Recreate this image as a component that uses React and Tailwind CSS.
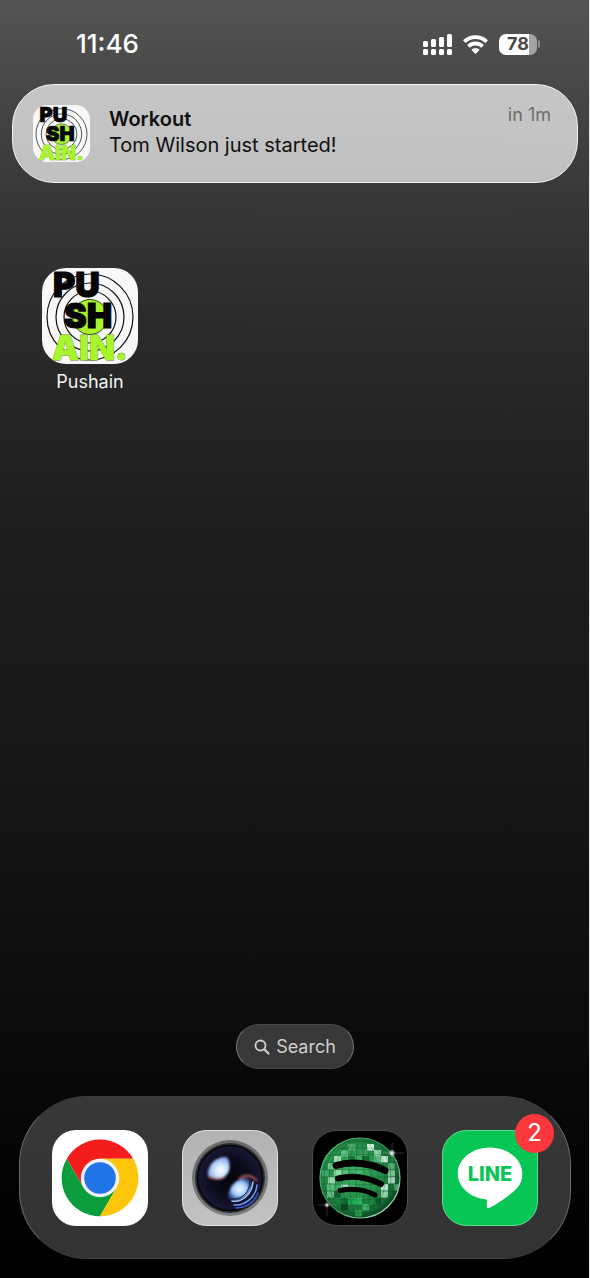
import React from 'react';

const RINGS = [43, 34, 26];
const DISCO_ROWS = [14, 20, 26, 33, 40, 47, 54, 61, 68, 74, 80];
const DISCO_COLS = [4, 11, 18, 25, 31, 36];

// [x, y, color, opacity] mirror tiles that catch the light
const DISCO_TILES = [
  [22, 26, '#d8f5e2', 0.7], [29, 20, '#7fd6a0', 0.7], [36, 14, '#5cb57d', 0.8], [55, 14, '#eafff2', 0.9],
  [62, 20, '#bff0cf', 0.7], [69, 26, '#e6fff0', 0.8], [48, 20, '#3f9a5f', 0.8], [22, 40, '#a9e8bf', 0.8],
  [16, 33, '#8fdcab', 0.7], [62, 26, '#74c792', 0.7], [76, 33, '#6fc48c', 0.7], [43, 26, '#46b06b', 0.6],
  [16, 47, '#c8f3d5', 0.7], [15, 54, '#66c588', 0.8], [76, 40, '#9fdcb3', 0.7], [76, 47, '#d9f7e3', 0.7],
  [69, 54, '#e2ffec', 0.8], [69, 61, '#b0e8c3', 0.8], [22, 54, '#43b069', 0.8], [29, 54, '#dcf8e5', 0.6],
  [36, 68, '#1fae52', 0.8], [43, 68, '#35c468', 0.8], [50, 74, '#4fd07c', 0.7], [29, 68, '#0d6a30', 0.8],
  [62, 68, '#0a4d23', 0.8], [43, 40, '#4dbd74', 0.5], [50, 26, '#0b5527', 0.7], [36, 26, '#0e5b2b', 0.6],
  [29, 74, '#0a3f1d', 0.8], [57, 40, '#2c9450', 0.7], [22, 61, '#0c4f25', 0.7], [55, 61, '#127a39', 0.7],
  [36, 54, '#6dd391', 0.5], [15, 61, '#94e0ae', 0.6], [43, 80, '#2cb85c', 0.7], [57, 68, '#1d8c45', 0.7],
  [29, 40, '#6fce90', 0.6], [10, 40, '#4caf70', 0.7], [29, 14, '#2a8549', 0.8], [82, 54, '#7ad49a', 0.6],
];

function PushainLogo({ className }) {
  return (
    <svg viewBox="0 0 96 96" className={className} aria-hidden="true">
      <rect width="96" height="96" rx="24" fill="#f8f8f8" />
      {RINGS.map(r => <circle key={r} cx="48" cy="49" r={r} fill="none" stroke="#111" strokeWidth="1.2" />)}
      <circle cx="48" cy="49" r="17.5" fill="#a8f52c" stroke="#111" strokeWidth="0.8" />
      <g fontFamily="Inter, sans-serif" fontWeight="900">
        <text x="11" y="29" fontSize="34" fill="#050505" stroke="#050505" strokeWidth="1.2">PU</text>
        <text x="22" y="60" fontSize="34" fill="#050505" stroke="#050505" strokeWidth="1.2">SH</text>
        <text x="10" y="92" fontSize="34" fill="#a8f52c" stroke="#5c8f10" strokeWidth="0.8" paintOrder="stroke">AIN.</text>
      </g>
    </svg>
  );
}

function ChromeIcon() {
  return (
    <svg viewBox="0 0 96 96" className="size-24" aria-hidden="true">
      <rect width="96" height="96" rx="24" fill="#fff" />
      <path d="M14.8 28.8A38.3 38.3 0 0 1 81.2 28.8H48L31.4 57.6Z" fill="#f51d1c" />
      <path d="M14.8 28.8A38.3 38.3 0 0 0 48 86.3L64.6 57.6H31.4Z" fill="#0a9c3d" />
      <path d="M81.2 28.8A38.3 38.3 0 0 1 48 86.3L64.6 57.6L48 28.8Z" fill="#fdc60b" />
      <circle cx="48" cy="48" r="19.2" fill="#f1f3f8" />
      <circle cx="48" cy="48" r="15.8" fill="#1f74e8" />
    </svg>
  );
}

function CameraIcon() {
  return (
    <svg viewBox="0 0 96 96" className="size-24" aria-hidden="true">
      <defs>
        <linearGradient id="camBody" x1="0" y1="0" x2="0" y2="1">
          <stop offset="0" stopColor="#b2b2b2" />
          <stop offset="1" stopColor="#c2c2c2" />
        </linearGradient>
        <linearGradient id="camRim" x1="0" y1="0" x2="0" y2="1">
          <stop offset="0" stopColor="#6a6c6c" />
          <stop offset="1" stopColor="#7b7c7c" />
        </linearGradient>
        <radialGradient id="camGlass">
          <stop offset="0" stopColor="#05060c" />
          <stop offset="0.6" stopColor="#0c0c1c" />
          <stop offset="1" stopColor="#1a1836" />
        </radialGradient>
        <radialGradient id="camFlareA" cx="0.58" cy="0.6" r="0.7">
          <stop offset="0" stopColor="#ffffff" />
          <stop offset="0.4" stopColor="#cfe4ff" />
          <stop offset="0.8" stopColor="#86a8e6" />
          <stop offset="1" stopColor="#4a5fa0" />
        </radialGradient>
        <radialGradient id="camFlareB" cx="0.5" cy="0.5" r="0.65">
          <stop offset="0" stopColor="#f8fcff" />
          <stop offset="0.5" stopColor="#9cc8ff" />
          <stop offset="1" stopColor="#2350c0" stopOpacity="0.3" />
        </radialGradient>
        <filter id="camSoft" x="-30%" y="-30%" width="160%" height="160%">
          <feGaussianBlur stdDeviation="0.8" />
        </filter>
      </defs>
      <rect x="0.5" y="0.5" width="95" height="95" rx="24" fill="url(#camBody)" stroke="#e6e6e6" />
      <circle cx="48" cy="48" r="38" fill="url(#camRim)" />
      <circle cx="48" cy="48" r="35" fill="#2b2d2e" />
      <circle cx="48" cy="48" r="32.5" fill="url(#camGlass)" stroke="#050507" strokeWidth="1.5" />
      <g filter="url(#camSoft)">
        <path d="M26 46C25 36 33 26 45 27C49 33 49 43 42 47C37 50 30 50 26 46Z" fill="url(#camFlareA)" />
        <path d="M26 46C31 50 38 50 43 47" fill="none" stroke="#a8584c" strokeWidth="1.8" />
        <path d="M46 68C46 58 53 48 66 48C73 53 68 65 59 69C54 71 49 70 46 68Z" fill="url(#camFlareB)" />
        <path d="M57 49C63 44 70 45 75 51" fill="none" stroke="#a05048" strokeWidth="2.4" />
      </g>
      <g fill="none" strokeLinecap="round">
        <path d="M50 69C60 70 68 62 68 51" stroke="#132048" strokeWidth="1" />
        <path d="M50 71C60 73 70 64 71 52" stroke="#9cc6ff" strokeWidth="1.6" />
        <path d="M52 75C63 76 74 67 75 55" stroke="#6f9cf5" strokeWidth="1.5" />
        <path d="M54 78C64 78 73 72 76 63" stroke="#3a62d8" strokeWidth="1.3" />
      </g>
    </svg>
  );
}

function SpotifyIcon() {
  return (
    <svg viewBox="0 0 96 96" className="size-24" aria-hidden="true">
      <defs>
        <radialGradient id="discoBall" cx="0.42" cy="0.42" r="0.62">
          <stop offset="0" stopColor="#3fb469" />
          <stop offset="0.55" stopColor="#249049" />
          <stop offset="0.85" stopColor="#176a36" />
          <stop offset="1" stopColor="#0b3d1e" />
        </radialGradient>
        <linearGradient id="discoEdge" x1="0" y1="0" x2="1" y2="1">
          <stop offset="0" stopColor="#5fd88a" />
          <stop offset="0.5" stopColor="#2b8a4c" />
          <stop offset="1" stopColor="#d5ffe3" />
        </linearGradient>
        <radialGradient id="sparkle">
          <stop offset="0" stopColor="#fff" />
          <stop offset="1" stopColor="#fff" stopOpacity="0" />
        </radialGradient>
        <clipPath id="discoClip"><circle cx="48" cy="48" r="40" /></clipPath>
      </defs>
      <rect x="0.5" y="0.5" width="95" height="95" rx="24" fill="#000" stroke="#4c4c4c" />
      <circle cx="48" cy="48" r="40" fill="url(#discoBall)" />
      <g clipPath="url(#discoClip)">
        {DISCO_TILES.map(([x, y, color, opacity]) => (
          <rect key={`${x}-${y}`} x={x} y={y} width="7" height="6.5" fill={color} opacity={opacity} />
        ))}
        <g fill="none" stroke="#0b4220" strokeWidth="0.5" opacity="0.6">
          {DISCO_ROWS.map(y => <path key={y} d={`M8 ${y}Q48 ${y + (y - 45) / 6} 88 ${y}`} />)}
          {DISCO_COLS.map(r => <ellipse key={r} cx="48" cy="48" rx={r} ry="40" />)}
        </g>
      </g>
      <circle cx="48" cy="48" r="40" fill="none" stroke="url(#discoEdge)" strokeWidth="1.2" />
      <g fill="none" stroke="#000" strokeLinecap="round">
        <path d="M24 35.5C39 31 59 33 73 40.5" strokeWidth="7" />
        <path d="M26 48.5C40 45 55 47 69 54" strokeWidth="6" />
        <path d="M28 60.5C40 58 52 59 63 65" strokeWidth="5" />
      </g>
      <circle cx="80" cy="23" r="4" fill="url(#sparkle)" />
      <path d="M80 13V33M71 23H92" stroke="#fff" strokeWidth="0.5" opacity="0.4" />
      <circle cx="15" cy="75" r="3" fill="url(#sparkle)" />
      <path d="M15 64V86M5 75H26" stroke="#fff" strokeWidth="0.5" opacity="0.35" />
    </svg>
  );
}

function LineIcon() {
  return (
    <svg viewBox="0 0 96 96" className="size-24" aria-hidden="true">
      <rect x="0.5" y="0.5" width="95" height="95" rx="24" fill="#08c655" stroke="#5fe08f" />
      <path d="M48 17.5C30.2 17.5 15.8 29 15.8 43.4C15.8 56.2 27 67 42.5 69.1C45.4 69.7 45.2 71.3 44.8 74.2C44.5 76.5 44.9 79 47.6 77.7C56 73.5 69.5 64.5 75.5 57.5C79 53.5 80.2 48.7 80.2 43.4C80.2 29 65.8 17.5 48 17.5Z" fill="#fff" />
      <text x="48" y="51" textAnchor="middle" fontFamily="Inter, sans-serif" fontWeight="800" fontSize="20" fill="#08c655">LINE</text>
    </svg>
  );
}

const DOCK = [
  { name: 'Chrome', Icon: ChromeIcon },
  { name: 'Camera', Icon: CameraIcon },
  { name: 'Spotify', Icon: SpotifyIcon },
  { name: 'LINE', Icon: LineIcon, badge: 2 },
];

function StatusBar() {
  return (
    <header className="flex h-[84px] items-center justify-between pt-1 pr-[50px] pl-[76px] text-white">
      <time className="text-[26px] leading-8 font-medium">11:46</time>
      <div className="flex items-center gap-[11px]">
        <svg viewBox="0 0 29 21" className="h-[21px] w-[29px]" fill="#fff" aria-hidden="true">
          <rect x="0" y="7" width="5" height="6" rx="1.5" />
          <rect x="8" y="5" width="5" height="8" rx="1.5" />
          <rect x="16" y="3" width="5" height="10" rx="1.5" />
          <rect x="24" y="0" width="5" height="13" rx="1.5" />
          {[0, 8, 16, 24].map(x => <rect key={x} x={x} y="15" width="5" height="6" rx="1.5" />)}
        </svg>
        <svg viewBox="0 0 25 19" className="h-[19px] w-[25px]" fill="none" stroke="#fff" strokeWidth="3.8" aria-hidden="true">
          <path d="M1.3 6.6A16 16 0 0 1 23.7 6.6" />
          <path d="M5.4 11.4A10.2 10.2 0 0 1 19.6 11.4" />
          <path d="M12.5 19L8.3 14.8A6 6 0 0 1 16.7 14.8Z" fill="#fff" stroke="none" />
        </svg>
        <div className="flex items-center gap-px">
          <div className="flex h-[21px] w-[38px] items-center justify-center rounded-[7px] bg-linear-to-r from-white from-78% to-[#a3a3a3] to-78% text-[18px] leading-5 font-bold text-[#474747]">78</div>
          <div className="h-2 w-0.5 rounded-r-full bg-[#8f8f8f]" />
        </div>
      </div>
    </header>
  );
}

export default function App() {
  return (
    <div className="flex min-h-screen flex-col bg-[linear-gradient(to_bottom,#545454_0%,#474747_7%,#383838_15%,#2b2b2b_25%,#1d1d1d_42%,#181818_58%,#0f0f0f_74%,#050505_90%,#000_100%)] font-['Inter',sans-serif] shadow-[inset_-1px_0_0_#e4e4e4]">
      <StatusBar />

      <section className="mx-3 flex h-[99px] items-center rounded-[42px] border border-[#f4f4f4] bg-linear-to-b from-[#c6c6c6] to-[#c0c0c0] pr-[26px] pl-5">
        <PushainLogo className="size-[57px]" />
        <div className="ml-[19px] flex-1 pb-1 text-[20px] leading-[26px] text-[#101010]">
          <h2 className="font-semibold">Workout</h2>
          <p>Tom Wilson just started!</p>
        </div>
        <span className="self-start pt-[18px] text-[18px] leading-6 text-[#6c6c6c]">in 1m</span>
      </section>

      <main className="flex-1 px-[42px] pt-[85px]">
        <button className="flex w-24 flex-col items-center gap-1.5">
          <PushainLogo className="size-24" />
          <span className="text-[18px] leading-6 text-[#f4f4f4]">Pushain</span>
        </button>
      </main>

      <button className="mb-[27px] flex h-[45px] items-center gap-1.5 self-center rounded-full border border-t-[#484848] border-r-[#777] border-b-[#484848] border-l-[#777] bg-[#383838] px-[17px] text-[18px] text-[#cfcfcf]">
        <svg viewBox="0 0 16 16" className="size-4" fill="none" stroke="currentColor" strokeLinecap="round" aria-hidden="true">
          <circle cx="6.5" cy="6.5" r="5" strokeWidth="1.8" />
          <path d="M10.5 10.5L14.5 14.5" strokeWidth="2.3" />
        </svg>
        Search
      </button>

      <nav className="mx-[19px] mb-[19px] flex h-[163px] items-center justify-between rounded-[68px] border border-t-[#3d3d3d] border-r-[#6a6a6a] border-b-[#3d3d3d] border-l-[#6a6a6a] bg-linear-to-b from-[#383838] to-[#323232] px-8">
        {DOCK.map(({ name, Icon, badge }) => (
          <button key={name} aria-label={name} className="relative">
            <Icon />
            {badge && (
              <span className="absolute -top-4 -right-4 flex size-[39px] items-center justify-center rounded-full bg-[#fd383c] text-[24px] leading-7 text-white">{badge}</span>
            )}
          </button>
        ))}
      </nav>
    </div>
  );
}
